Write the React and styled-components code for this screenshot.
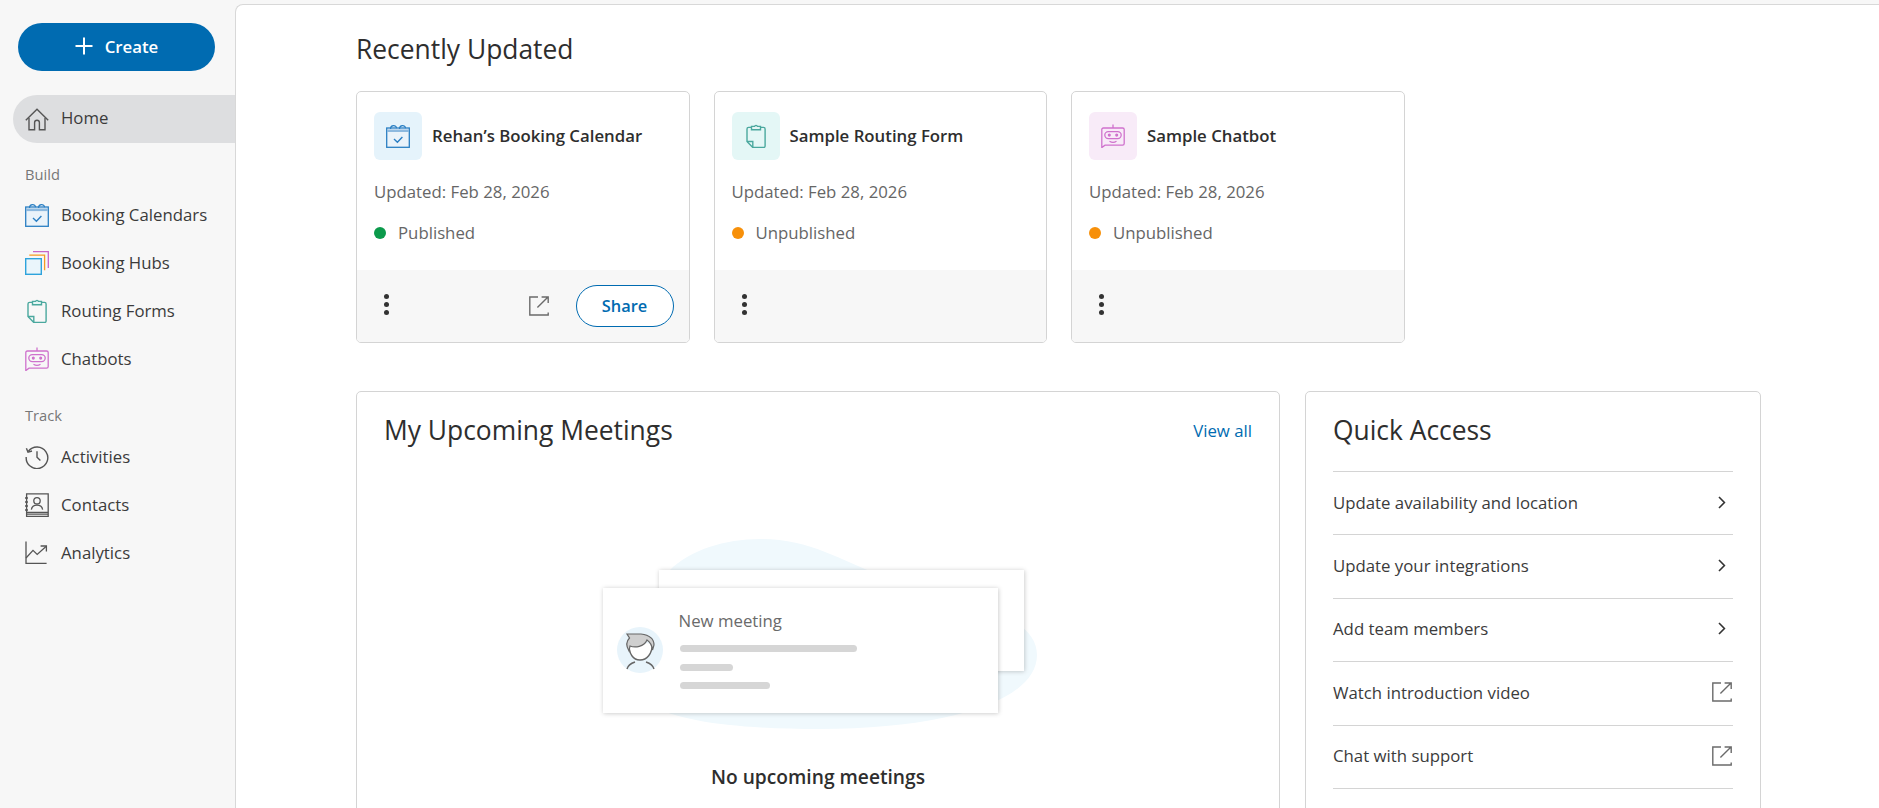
import React from 'react';
import styled, { createGlobalStyle } from 'styled-components';

const GlobalStyle = createGlobalStyle`
  html, body {
    margin: 0;
    height: 100%;
    overflow: hidden;
    background: #f7f7f7;
    font-family: "Open Sans", "Liberation Sans", sans-serif;
    color: #333;
  }
  * { box-sizing: border-box; }
`;

const Plus = () => (
  <svg width="18" height="18" viewBox="0 0 18 18" fill="none" stroke="#fff" strokeWidth="2">
    <path d="M9 .5v17M.5 9h17" />
  </svg>
);

const HomeIcon = () => (
  <svg width="24" height="24" viewBox="0 0 24 24" fill="none" stroke="#555" strokeWidth="1.4">
    <path d="M.8 13.2 12 2.2l11.2 11" />
    <path d="M4 11v11.8h5.6v-7.2a2.4 2.4 0 0 1 4.8 0v7.2H20V11" />
  </svg>
);

const CalendarIcon = () => (
  <svg width="24" height="24" viewBox="0 0 24 24" fill="none">
    <rect x=".7" y="4" width="22.6" height="19.3" fill="#eaf3fa" stroke="#2b7fc3" strokeWidth="1.3" />
    <path d="M1 6.8h22" stroke="#8db9df" strokeWidth="2.6" />
    <path d="M4.5 5C4.5 .6 10.5 .6 10.5 4.2M13.5 5c0-4.4 6-4.4 6-.8" stroke="#2b7fc3" strokeWidth="1.2" />
    <path d="M8 15l3.4 3.2L16.4 13" stroke="#2b7fc3" strokeWidth="1.4" />
  </svg>
);

const HubsIcon = () => (
  <svg width="24" height="24" viewBox="0 0 24 24" fill="none">
    <path d="M8 .7h15.3V17" stroke="#c765c6" strokeWidth="1.3" />
    <path d="M4.3 4.2h15.3v15" stroke="#f59b23" strokeWidth="1.3" />
    <rect x=".7" y="7.7" width="15.6" height="15.6" fill="#eaf5fb" stroke="#2ea3dc" strokeWidth="1.4" />
  </svg>
);

const RoutingIcon = () => (
  <svg width="24" height="24" viewBox="0 0 24 24" fill="none" stroke="#4aa89e" strokeWidth="1.4">
    <path d="M7.5 3.4H4.6Q3 3.4 3 5V17.5l5.8 6h10.7q1.6 0 1.6-1.6V5q0-1.6-1.6-1.6h-3" />
    <path d="M3 17.5h5.8v6" />
    <path d="M7.5 2.4h3a1.6 1.6 0 0 1 3 0h3v3.4h-9z" fill="#e4f6f5" />
  </svg>
);

const ChatbotIcon = () => (
  <svg width="24" height="24" viewBox="0 0 24 24" fill="none" stroke="#cf72cd" strokeWidth="1.3">
    <path d="M.8 23.6V5.6Q.8 4 2.4 4h19.2q1.6 0 1.6 1.6v14q0 1.6-1.6 1.6H4z" />
    <path d="M12 4V.4" />
    <rect x="3.8" y="7.6" width="16.4" height="7" rx="3.5" />
    <circle cx="8.3" cy="11.1" r=".9" fill="#cf72cd" />
    <circle cx="15.7" cy="11.1" r=".9" fill="#cf72cd" />
    <path d="M8.5 17.2c2 1.3 5 1.3 7 0" />
  </svg>
);

const ActivitiesIcon = () => (
  <svg width="24" height="24" viewBox="0 0 24 24" fill="none" stroke="#555" strokeWidth="1.4">
    <path d="M3.4 6.2A10.8 10.8 0 1 1 1.2 12" />
    <path d="M1.4 3.2 3 7.2l4-1.2" />
    <path d="M12 6.2v6l3.4 3.4" />
  </svg>
);

const ContactsIcon = () => (
  <svg width="24" height="24" viewBox="0 0 24 24" fill="none" stroke="#555" strokeWidth="1.3">
    <path d="M1.6 .8h21.6v22.6H1.6zM1.6 19.4h21.6M1.6 21.2h21.6" />
    <path d="M0 5h3M0 9h3M0 13h3M0 17h3" />
    <circle cx="12" cy="7.8" r="3.2" />
    <path d="M6.4 16.6c.8-6 10.4-6 11.2 0" />
  </svg>
);

const AnalyticsIcon = () => (
  <svg width="24" height="24" viewBox="0 0 24 24" fill="none" stroke="#555" strokeWidth="1.3">
    <path d="M1 .5v21.8h20.6" />
    <path d="M1 17l7-7.6 4.2 4L21 5.4" />
    <path d="M15.6 5h5.8v5.6" />
  </svg>
);

const ExternalIcon = () => (
  <svg width="20" height="20" viewBox="0 0 20 20" fill="none" stroke="#6b6b6b" strokeWidth="1.4">
    <path d="M9 1H.8v18h18.4v-2.4" />
    <path d="M8.4 11.4 19 1M12.6 1h6.6v6" />
  </svg>
);

const Chevron = () => (
  <svg width="8" height="13" viewBox="0 0 8 13" fill="none" stroke="#333" strokeWidth="1.6">
    <path d="M1 1l5.4 5.5L1 12" />
  </svg>
);

const MeetingArt = () => (
  <svg width="444" height="200" viewBox="596 535 444 200" fill="none">
    <defs>
      <filter id="soft" x="-5%" y="-10%" width="110%" height="120%">
        <feDropShadow dx="0.5" dy="0.5" stdDeviation="2" floodColor="#000" floodOpacity="0.22" />
      </filter>
    </defs>
    <path
      d="M760 539C810 539 840 560 880 575C950 600 1037 610 1037 655C1037 700 950 729 820 729C740 729 680 722 650 705C620 680 640 640 670 570C690 550 725 539 760 539Z"
      fill="#f0f9fd"
    />
    <rect x="659" y="570" width="365" height="101" fill="#fff" filter="url(#soft)" />
    <rect x="603" y="588" width="395" height="125" fill="#fff" filter="url(#soft)" />
    <circle cx="640" cy="650" r="23" fill="#e8f4fb" />
    <path d="M629 641C628 655 634 660 640 660C647 660 652 654 652.5 644" fill="#fff" stroke="#666" strokeWidth="1.4" />
    <path
      d="M627 634L641 634C649 635 654 638 654 645L652.5 650C652 645 650 642 647 640C644 647 635 648 630 646L629 651C626 646 626.5 641 629.5 638Z"
      fill="#cfcfcf"
      stroke="#666"
      strokeWidth="1.2"
    />
    <path d="M627 669C628 665 632 663 635 662M654 669C653 665 649 663 646 662" stroke="#666" strokeWidth="1.4" />
    <text x="678.5" y="627" fontFamily="'Open Sans', sans-serif" fontSize="16.8" fill="#6a6a6a">
      New meeting
    </text>
    <rect x="680" y="645" width="177" height="7" rx="3.5" fill="#d6d6d6" />
    <rect x="680" y="664" width="53" height="7" rx="3.5" fill="#d6d6d6" />
    <rect x="680" y="682" width="90" height="7" rx="3.5" fill="#d6d6d6" />
  </svg>
);

const navBuild = [
  { label: 'Booking Calendars', icon: <CalendarIcon /> },
  { label: 'Booking Hubs', icon: <HubsIcon /> },
  { label: 'Routing Forms', icon: <RoutingIcon /> },
  { label: 'Chatbots', icon: <ChatbotIcon /> },
];

const navTrack = [
  { label: 'Activities', icon: <ActivitiesIcon /> },
  { label: 'Contacts', icon: <ContactsIcon /> },
  { label: 'Analytics', icon: <AnalyticsIcon /> },
];

const recent = [
  { title: 'Rehan’s Booking Calendar', icon: <CalendarIcon />, tint: '#e5f3fb', status: 'Published', dot: '#0b9a4b', live: true },
  { title: 'Sample Routing Form', icon: <RoutingIcon />, tint: '#e4f7f6', status: 'Unpublished', dot: '#f7900a' },
  { title: 'Sample Chatbot', icon: <ChatbotIcon />, tint: '#f8ebf8', status: 'Unpublished', dot: '#f7900a' },
];

const quickLinks = [
  { label: 'Update availability and location', icon: <Chevron /> },
  { label: 'Update your integrations', icon: <Chevron /> },
  { label: 'Add team members', icon: <Chevron /> },
  { label: 'Watch introduction video', icon: <ExternalIcon /> },
  { label: 'Chat with support', icon: <ExternalIcon /> },
];

const App = () => {
  return (
    <Page>
      <GlobalStyle />
      <Sidebar>
        <CreateButton type="button">
          <Plus />
          Create
        </CreateButton>
        <NavItem $active>
          <NavIcon><HomeIcon /></NavIcon>
          <HomeLabel>Home</HomeLabel>
        </NavItem>
        <NavLabel>Build</NavLabel>
        {navBuild.map((item) => (
          <NavItem key={item.label}>
            <NavIcon>{item.icon}</NavIcon>
            {item.label}
          </NavItem>
        ))}
        <NavLabel $track>Track</NavLabel>
        {navTrack.map((item) => (
          <NavItem key={item.label}>
            <NavIcon>{item.icon}</NavIcon>
            {item.label}
          </NavItem>
        ))}
      </Sidebar>
      <Main>
        <SectionTitle>Recently Updated</SectionTitle>
        <CardRow>
          {recent.map((card) => (
            <RecentCard key={card.title}>
              <CardBody>
                <CardHead>
                  <IconTile $tint={card.tint}>{card.icon}</IconTile>
                  <CardTitle>{card.title}</CardTitle>
                </CardHead>
                <Updated>Updated: Feb 28, 2026</Updated>
                <Status>
                  <Dot $color={card.dot} />
                  {card.status}
                </Status>
              </CardBody>
              <CardFooter>
                <Kebab>
                  <i /><i /><i />
                </Kebab>
                {card.live && (
                  <FooterActions>
                    <ExternalIcon />
                    <ShareButton type="button">Share</ShareButton>
                  </FooterActions>
                )}
              </CardFooter>
            </RecentCard>
          ))}
        </CardRow>
        <PanelRow>
          <MeetingsPanel>
            <PanelHead>
              <PanelTitle>My Upcoming Meetings</PanelTitle>
              <ViewAll href="#">View all</ViewAll>
            </PanelHead>
            <ArtWrap>
              <MeetingArt />
            </ArtWrap>
            <EmptyText>No upcoming meetings</EmptyText>
          </MeetingsPanel>
          <QuickPanel>
            <QuickTitle>Quick Access</QuickTitle>
            <QuickList>
              {quickLinks.map((link) => (
                <QuickRow key={link.label}>
                  {link.label}
                  <QuickIcon>{link.icon}</QuickIcon>
                </QuickRow>
              ))}
            </QuickList>
          </QuickPanel>
        </PanelRow>
      </Main>
    </Page>
  );
};

const Page = styled.div`
  display: flex;
  height: 808px;
  overflow: hidden;
`;

const Sidebar = styled.aside`
  width: 235px;
  flex: none;
  padding-top: 23px;
  background: #f7f7f7;
`;

const CreateButton = styled.button`
  display: flex;
  align-items: center;
  justify-content: center;
  gap: 12px;
  width: 197px;
  height: 48px;
  margin: 0 0 24px 18px;
  padding: 0 0 2px;
  border: 0;
  border-radius: 24px;
  background: #006bb1;
  color: #fff;
  font: 600 16.8px "Open Sans", sans-serif;
`;

const NavItem = styled.div`
  display: flex;
  align-items: center;
  height: 48px;
  margin-left: 13px;
  padding-left: 12px;
  border-radius: 24px 0 0 24px;
  background: ${(p) => (p.$active ? '#dddee0' : 'transparent')};
  color: #3b3b3b;
  font-size: 16.8px;
  line-height: 22px;
`;

const HomeLabel = styled.span`
  margin-bottom: 2px;
`;

const NavIcon = styled.span`
  display: flex;
  width: 36px;
  flex: none;
`;

const NavLabel = styled.div`
  padding: ${(p) => (p.$track ? '22px 0 8px 25px' : '21px 0 7px 25px')};
  color: #777;
  font-size: 14.7px;
  line-height: 20px;
`;

const Main = styled.main`
  flex: 1;
  min-width: 0;
  height: 804px;
  margin-top: 4px;
  padding: 28px 118px 0 120px;
  overflow: hidden;
  background: #fff;
  border: 1px solid #d8d8d8;
  border-right: 0;
  border-bottom: 0;
  border-top-left-radius: 8px;
`;

const SectionTitle = styled.h2`
  margin: 0 0 26px;
  color: #2e2e2e;
  font-size: 26.4px;
  font-weight: 400;
  line-height: 32px;
`;

const CardRow = styled.div`
  display: flex;
  gap: 24px;
`;

const RecentCard = styled.div`
  display: flex;
  flex-direction: column;
  width: 333.5px;
  height: 252px;
  overflow: hidden;
  border: 1px solid #d4d4d4;
  border-radius: 5px;
`;

const CardBody = styled.div`
  height: 178px;
  padding: 20px 17px 0;
`;

const CardHead = styled.div`
  display: flex;
  align-items: center;
  gap: 10px;
`;

const IconTile = styled.div`
  display: flex;
  align-items: center;
  justify-content: center;
  width: 48px;
  height: 48px;
  border-radius: 6px;
  background: ${(p) => p.$tint};
`;

const CardTitle = styled.div`
  margin-bottom: 2px;
  color: #2e2e2e;
  font-size: 16.8px;
  font-weight: 600;
`;

const Updated = styled.div`
  margin-top: 21px;
  color: #666;
  font-size: 16.8px;
  line-height: 22px;
`;

const Status = styled.div`
  display: flex;
  align-items: center;
  gap: 12px;
  margin-top: 19px;
  color: #666;
  font-size: 16.8px;
  line-height: 22px;
`;

const Dot = styled.span`
  width: 12px;
  height: 12px;
  border-radius: 50%;
  background: ${(p) => p.$color};
`;

const CardFooter = styled.div`
  display: flex;
  flex: 1;
  align-items: center;
  justify-content: space-between;
  padding: 0 15px 0 27px;
  background: #f7f7f7;
`;

const Kebab = styled.div`
  display: flex;
  flex-direction: column;
  gap: 3px;
  margin-top: -4px;

  i {
    display: block;
    width: 5px;
    height: 5px;
    border-radius: 50%;
    background: #333;
  }
`;

const FooterActions = styled.div`
  display: flex;
  align-items: center;
  gap: 27px;
`;

const ShareButton = styled.button`
  width: 98px;
  height: 42px;
  padding: 0 0 2px;
  border: 1px solid #006bb1;
  border-radius: 21px;
  background: #fff;
  color: #006bb1;
  font: 600 16.4px "Open Sans", sans-serif;
`;

const PanelRow = styled.div`
  display: flex;
  gap: 25px;
  margin-top: 48px;
`;

const MeetingsPanel = styled.section`
  width: 924px;
  height: 520px;
  padding-top: 22px;
  border: 1px solid #d4d4d4;
  border-radius: 5px;
`;

const PanelHead = styled.div`
  display: flex;
  align-items: center;
  justify-content: space-between;
  padding: 0 27px;
`;

const PanelTitle = styled.h3`
  margin: 0;
  color: #2e2e2e;
  font-size: 26.4px;
  font-weight: 400;
  line-height: 32px;
`;

const ViewAll = styled.a`
  color: #006bb1;
  font-size: 16.8px;
  text-decoration: none;
`;

const ArtWrap = styled.div`
  display: flex;
  justify-content: center;
  margin-top: 89px;
`;

const EmptyText = styled.div`
  margin-top: 29px;
  color: #2e2e2e;
  font-size: 19.2px;
  font-weight: 600;
  line-height: 26px;
  text-align: center;
`;

const QuickPanel = styled.section`
  width: 456px;
  height: 520px;
  padding: 22px 27px 0;
  border: 1px solid #d4d4d4;
  border-radius: 5px;
`;

const QuickTitle = styled.h3`
  margin: 0 0 25px;
  color: #2e2e2e;
  font-size: 26.4px;
  font-weight: 400;
  line-height: 32px;
`;

const QuickList = styled.div`
  border-top: 1px solid #d4d4d4;
`;

const QuickRow = styled.div`
  display: flex;
  align-items: center;
  justify-content: space-between;
  height: 63.4px;
  padding-bottom: 2px;
  border-bottom: 1px solid #d4d4d4;
  color: #3b3b3b;
  font-size: 16.8px;
`;

const QuickIcon = styled.span`
  display: flex;
  justify-content: center;
  width: 20px;
  margin-right: 1px;
`;

export default App;
